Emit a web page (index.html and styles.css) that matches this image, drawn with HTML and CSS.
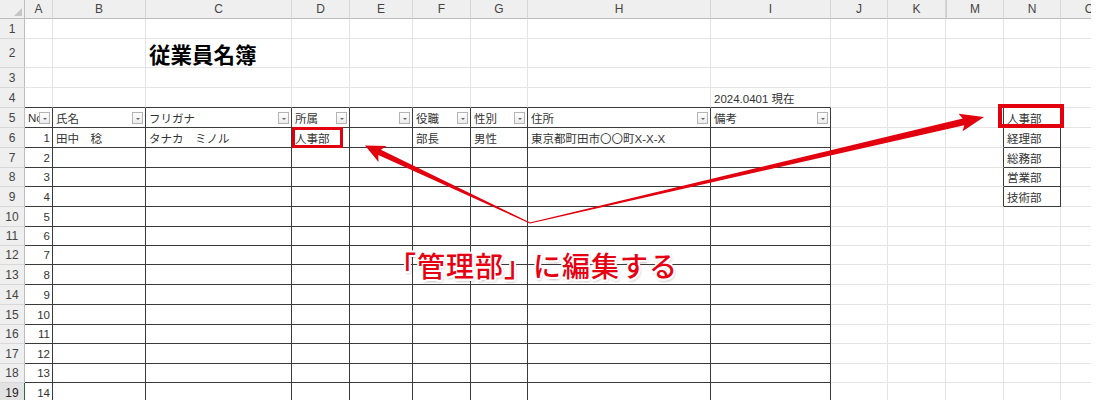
FILE: index.html
```html
<!DOCTYPE html>
<html lang="ja">
<head>
<meta charset="utf-8">
<title>従業員名簿</title>
<link rel="stylesheet" href="styles.css">
</head>
<body>
<div class="sheet">
  <div class="row colhdr"><span class="corner"></span><span>A</span><span>B</span><span>C</span><span>D</span><span>E</span><span>F</span><span>G</span><span>H</span><span>I</span><span>J</span><span>K</span><span class="after-hidden">M</span><span>N</span><span>O</span></div>
  <div class="row"><span>1</span><span></span><span></span><span></span><span></span><span></span><span></span><span></span><span></span><span></span><span></span><span></span><span></span><span></span><span></span></div>
  <div class="row tall"><span>2</span><span></span><span></span><span class="title">従業員名簿</span><span></span><span></span><span></span><span></span><span></span><span></span><span></span><span></span><span></span><span></span><span></span></div>
  <div class="row"><span>3</span><span></span><span></span><span></span><span></span><span></span><span></span><span></span><span></span><span></span><span></span><span></span><span></span><span></span><span></span></div>
  <div class="row above"><span>4</span><span></span><span></span><span></span><span></span><span></span><span></span><span></span><span></span><span>2024.0401 現在</span><span></span><span></span><span></span><span></span><span></span></div>
  <div class="row tb hd ls"><span>5</span><span><span class="tx">No</span><i class="dd"></i></span><span><span class="tx">氏名</span><i class="dd"></i></span><span><span class="tx">フリガナ</span><i class="dd"></i></span><span><span class="tx">所属</span><i class="dd"></i></span><span><i class="dd"></i></span><span><span class="tx">役職</span><i class="dd"></i></span><span><span class="tx">性別</span><i class="dd"></i></span><span><span class="tx">住所</span><i class="dd"></i></span><span><span class="tx">備考</span><i class="dd"></i></span><span></span><span></span><span></span><span>人事部</span><span></span></div>
  <div class="row tb ls"><span>6</span><span class="n">1</span><span>田中　稔</span><span>タナカ　ミノル</span><span>人事部</span><span></span><span>部長</span><span>男性</span><span>東京都町田市〇〇町X-X-X</span><span></span><span></span><span></span><span></span><span>経理部</span><span></span></div>
  <div class="row tb ls"><span>7</span><span class="n">2</span><span></span><span></span><span></span><span></span><span></span><span></span><span></span><span></span><span></span><span></span><span></span><span>総務部</span><span></span></div>
  <div class="row tb ls short"><span>8</span><span class="n">3</span><span></span><span></span><span></span><span></span><span></span><span></span><span></span><span></span><span></span><span></span><span></span><span>営業部</span><span></span></div>
  <div class="row tb ls"><span>9</span><span class="n">4</span><span></span><span></span><span></span><span></span><span></span><span></span><span></span><span></span><span></span><span></span><span></span><span>技術部</span><span></span></div>
  <div class="row tb"><span>10</span><span class="n">5</span><span></span><span></span><span></span><span></span><span></span><span></span><span></span><span></span><span></span><span></span><span></span><span></span><span></span></div>
  <div class="row tb short"><span>11</span><span class="n">6</span><span></span><span></span><span></span><span></span><span></span><span></span><span></span><span></span><span></span><span></span><span></span><span></span><span></span></div>
  <div class="row tb short"><span>12</span><span class="n">7</span><span></span><span></span><span></span><span></span><span></span><span></span><span></span><span></span><span></span><span></span><span></span><span></span><span></span></div>
  <div class="row tb"><span>13</span><span class="n">8</span><span></span><span></span><span></span><span></span><span></span><span></span><span></span><span></span><span></span><span></span><span></span><span></span><span></span></div>
  <div class="row tb"><span>14</span><span class="n">9</span><span></span><span></span><span></span><span></span><span></span><span></span><span></span><span></span><span></span><span></span><span></span><span></span><span></span></div>
  <div class="row tb"><span>15</span><span class="n">10</span><span></span><span></span><span></span><span></span><span></span><span></span><span></span><span></span><span></span><span></span><span></span><span></span><span></span></div>
  <div class="row tb short"><span>16</span><span class="n">11</span><span></span><span></span><span></span><span></span><span></span><span></span><span></span><span></span><span></span><span></span><span></span><span></span><span></span></div>
  <div class="row tb"><span>17</span><span class="n">12</span><span></span><span></span><span></span><span></span><span></span><span></span><span></span><span></span><span></span><span></span><span></span><span></span><span></span></div>
  <div class="row tb short"><span>18</span><span class="n">13</span><span></span><span></span><span></span><span></span><span></span><span></span><span></span><span></span><span></span><span></span><span></span><span></span><span></span></div>
  <div class="row tb cur"><span>19</span><span class="n">14</span><span></span><span></span><span></span><span></span><span></span><span></span><span></span><span></span><span></span><span></span><span></span><span></span><span></span></div>
</div>

<svg class="marks" width="1096" height="400" viewBox="0 0 1096 400" aria-hidden="true">
  <rect x="293.5" y="128.5" width="48" height="18" fill="none" stroke="#e2000f" stroke-width="3"/>
  <rect x="1000" y="106" width="62" height="20" fill="none" stroke="#e2000f" stroke-width="4"/>
  <polygon points="530.2,222.5 380.9,149.7 386.5,145.9 365,145.5 378.5,162 378.3,155.1 529.8,223.5" fill="#e2000f"/>
  <polygon points="529.9,222.5 962.7,118.4 958.6,113.7 984,117 962.6,131.3 964.3,125.2 530.1,223.5" fill="#e2000f"/>
</svg>
<div class="note">「管理部」に編集する</div>
</body>
</html>
```

FILE: styles.css
```css
* { box-sizing: border-box; }

html, body { margin: 0; padding: 0; }

body {
  position: relative;
  width: 1096px;
  height: 400px;
  overflow: hidden;
  background: #fff;
  font-family: "Liberation Sans", "Noto Sans CJK JP", sans-serif;
  color: #333;
}

.sheet {
  width: 1091px;
  overflow: hidden;
}

.row {
  display: grid;
  grid-template-columns: 25px 28px 93px 146px 58px 63px 58px 57px 183px 120px 57px 58px 58px 57px 58px;
  height: 20px;
}
.row.short { height: 19px; }
.row.tall { height: 29px; }
.row.colhdr { height: 19px; }

.row > span {
  display: flex;
  align-items: center;
  min-width: 0;
  overflow: hidden;
  white-space: nowrap;
  padding: 0 2px 0 3px;
  border-right: 1px solid #e4e4e4;
  border-bottom: 1px solid #e4e4e4;
  font-size: 11.5px;
}

/* row headers */
.row > span:first-child {
  justify-content: center;
  padding: 0;
  background: #efefef;
  border-right-color: #bdbdbd;
  border-bottom-color: #d8d8d8;
  color: #444;
  font-size: 12px;
}

/* column headers */
.colhdr > span {
  justify-content: center;
  padding: 0;
  background: #efefef;
  border-right-color: #d6d6d6;
  border-bottom-color: #bdbdbd;
  color: #444;
  font-size: 12px;
}
.colhdr > span.after-hidden { border-left: 1px solid #cfcfcf; }

.colhdr > span.corner {
  justify-content: flex-end;
  align-items: flex-end;
  padding: 0 2px 2px 0;
  border-right-color: #bdbdbd;
  border-bottom-color: #bdbdbd;
}
.corner::after {
  content: "";
  width: 8px;
  height: 8px;
  background: #c6c6c6;
  clip-path: polygon(100% 0, 100% 100%, 0 100%);
}

.cur > span:first-child {
  border-right-color: #217346;
  background: #e2e2e2;
  color: #222;
}

/* table borders (A..I) */
.tb > span:nth-child(n+2):nth-child(-n+10) {
  border-right-color: #3a3a3a;
  border-bottom-color: #3a3a3a;
}
.above > span:nth-child(n+2):nth-child(-n+10),
.above > span:nth-child(14) {
  border-bottom-color: #3a3a3a;
}

/* department list in N */
.ls > span:nth-child(13) { border-right-color: #3a3a3a; }
.ls > span:nth-child(14) {
  border-right-color: #3a3a3a;
  border-bottom-color: #3a3a3a;
}

.row > span.n { justify-content: flex-end; }

.row > span.title {
  overflow: visible;
  font-family: "Noto Sans CJK JP", sans-serif;
  font-weight: 700;
  font-size: 21.5px;
  line-height: 1;
  color: #000;
  padding-top: 2px;
}

/* filter dropdown buttons */
.tx {
  flex: 0 1 auto;
  min-width: 0;
  overflow: hidden;
}
.dd {
  flex: none;
  display: flex;
  align-items: center;
  justify-content: center;
  margin-left: auto;
  align-self: flex-end;
  margin-bottom: 3px;
  width: 11px;
  height: 12px;
  border: 1px solid #b4b4b4;
  background: linear-gradient(#fdfdfd, #ececec);
}
.dd::after {
  content: "";
  margin-top: 2px;
  border-left: 2px solid transparent;
  border-right: 2px solid transparent;
  border-top: 2px solid #666;
}

/* annotations */
.marks {
  position: absolute;
  left: 0;
  top: 0;
  pointer-events: none;
}

.note {
  position: absolute;
  left: 388px;
  top: 251px;
  font-family: "Noto Sans CJK JP", sans-serif;
  font-weight: 500;
  font-size: 28px;
  line-height: 1;
  letter-spacing: 1px;
  white-space: nowrap;
  color: #e60012;
  text-shadow:
    -2px 0 0 #fff, 2px 0 0 #fff, 0 -2px 0 #fff, 0 2px 0 #fff,
    -1.5px -1.5px 0 #fff, 1.5px -1.5px 0 #fff, -1.5px 1.5px 0 #fff, 1.5px 1.5px 0 #fff,
    1px 2px 3px rgba(0, 0, 0, 0.5);
}
```
